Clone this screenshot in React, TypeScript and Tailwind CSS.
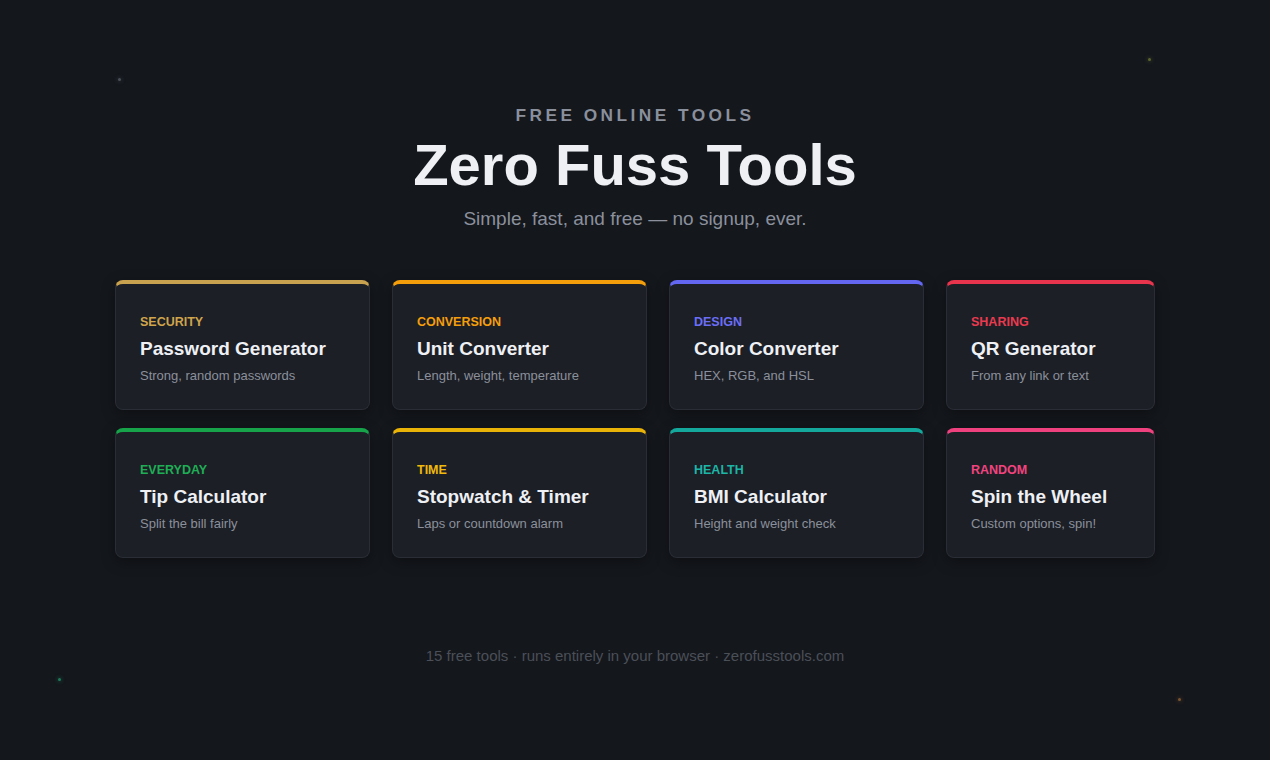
const TOOLS = [
  { tag: "SECURITY", title: "Password Generator", desc: "Strong, random passwords", bar: "border-t-[#c9a24f]", text: "text-[#d0a54c]" },
  { tag: "CONVERSION", title: "Unit Converter", desc: "Length, weight, temperature", bar: "border-t-[#f59e0b]", text: "text-[#f59e0b]" },
  { tag: "DESIGN", title: "Color Converter", desc: "HEX, RGB, and HSL", bar: "border-t-[#6366f1]", text: "text-[#6b6ef5]" },
  { tag: "SHARING", title: "QR Generator", desc: "From any link or text", bar: "border-t-[#e8344c]", text: "text-[#ea3a4f]" },
  { tag: "EVERYDAY", title: "Tip Calculator", desc: "Split the bill fairly", bar: "border-t-[#16a34a]", text: "text-[#1fae55]" },
  { tag: "TIME", title: "Stopwatch & Timer", desc: "Laps or countdown alarm", bar: "border-t-[#eab308]", text: "text-[#f0b90b]" },
  { tag: "HEALTH", title: "BMI Calculator", desc: "Height and weight check", bar: "border-t-[#14a89c]", text: "text-[#1cb5a6]" },
  { tag: "RANDOM", title: "Spin the Wheel", desc: "Custom options, spin!", bar: "border-t-[#f0417f]", text: "text-[#f2437f]" },
];

const ToolCard = ({ tool }: { tool: (typeof TOOLS)[number] }) => (
  <div
    className={`h-[130px] rounded-lg border border-[#2a2d35] border-t-4 ${tool.bar} bg-[#1c1f26] px-6 pt-[30px] shadow-[0_4px_14px_rgba(0,0,0,0.35)]`}
  >
    <div className={`text-[12.5px] font-bold leading-4 ${tool.text}`}>{tool.tag}</div>
    <div className="mt-[7px] text-[19px] font-bold leading-6 text-[#eef0f4]">{tool.title}</div>
    <div className="mt-[6px] text-[13px] leading-[18px] text-[#8b909b]">{tool.desc}</div>
  </div>
);

export default function App() {
  return (
    <div className="relative h-[760px] w-full overflow-hidden bg-[#14171c] font-['Liberation_Sans',Arial,sans-serif]">
      {/* faint sparkle dots */}
      <span className="absolute left-[118px] top-[78px] size-[3px] rounded-full bg-[#4a4f58] shadow-[0_0_4px_#4a4f58]" />
      <span className="absolute left-[1148px] top-[58px] size-[3px] rounded-full bg-[#5a6530] shadow-[0_0_4px_#5a6530]" />
      <span className="absolute left-[58px] top-[678px] size-[3px] rounded-full bg-[#1f7a5a] shadow-[0_0_4px_#1f7a5a]" />
      <span className="absolute left-[1178px] top-[698px] size-[3px] rounded-full bg-[#7a5530] shadow-[0_0_4px_#7a5530]" />

      <div className="flex flex-col items-center pt-[105px]">
        <div className="text-[17.3px] font-bold leading-5 tracking-[0.2em] text-[#8a8f9c]">FREE ONLINE TOOLS</div>
        <h1 className="mt-[7px] text-[58px] font-bold leading-[66px] text-[#eef0f4]">Zero Fuss Tools</h1>
        <p className="mt-[7px] text-[19px] leading-[27px] text-[#8b909c]">Simple, fast, and free — no signup, ever.</p>

        <div className="mt-[48px] grid grid-cols-[255px_255px_255px_209px] gap-x-[22px] gap-y-[18px]">
          {TOOLS.map((tool) => (
            <ToolCard key={tool.title} tool={tool} />
          ))}
        </div>

        <p className="mt-[88px] text-[15px] leading-5 text-[#4b4f58]">
          15 free tools · runs entirely in your browser · zerofusstools.com
        </p>
      </div>
    </div>
  );
}
